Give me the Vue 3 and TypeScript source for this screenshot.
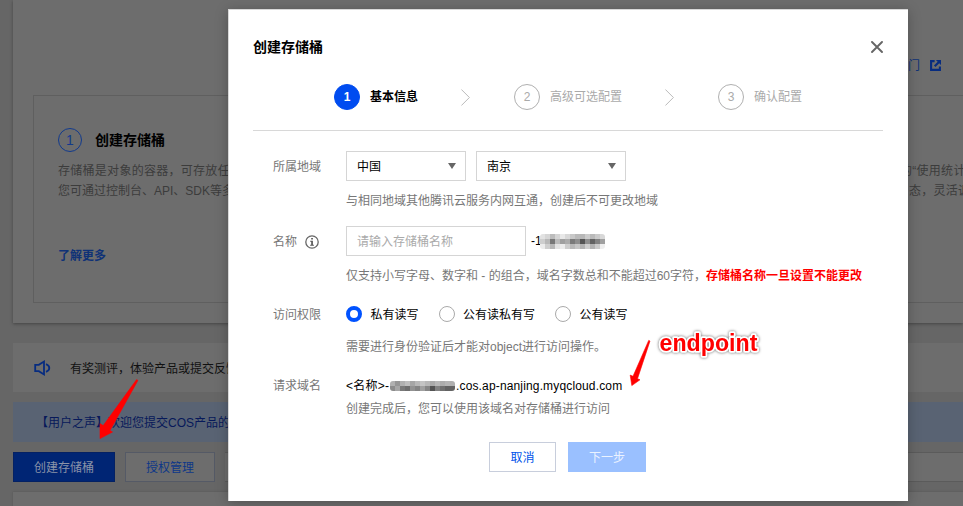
<script setup lang="ts">
interface Step {
  index: number
  label: string
  active: boolean
}

const steps: Step[] = [
  { index: 1, label: '基本信息', active: true },
  { index: 2, label: '高级可选配置', active: false },
  { index: 3, label: '确认配置', active: false },
]

const permissions = [
  { label: '私有读写', checked: true },
  { label: '公有读私有写', checked: false },
  { label: '公有读写', checked: false },
]

// Grey levels of the pixelated account ids, one row per line of cells
const nameMask: number[][] = [
  [226, 214, 188, 212, 232, 216, 200, 186, 184, 204, 186, 202, 216],
  [206, 184, 118, 186, 160, 172, 122, 142, 84, 142, 98, 130, 160],
  [236, 206, 182, 226, 236, 206, 184, 198, 178, 206, 178, 202, 238],
]
const domainMask: number[][] = [
  [176, 150, 176, 190, 166, 184, 196, 184, 170, 184, 172, 180, 176],
  [140, 166, 122, 110, 146, 132, 160, 134, 84, 130, 112, 98, 100],
]
const grey = (v: number): string => `rgb(${v}, ${v}, ${v})`
</script>

<template>
  <div class="screen">
    <div class="page">
      <section class="guide">
        <div class="guide-top">
          <span>快速入门</span>
          <svg class="ext" viewBox="0 0 10 10">
            <path d="M4.2 1H1v8h8V6" fill="none" stroke="currentColor" stroke-width="1.9" />
            <path d="M5.4 0H10v4.6L8.4 3 5 6.4 3.6 5 7 1.6z" fill="currentColor" />
          </svg>
        </div>
        <div class="guide-box">
          <div class="guide-col">
            <h3><i>1</i>创建存储桶</h3>
            <p class="loose">存储桶是对象的容器，可存放任意</p>
            <p>您可通过控制台、API、SDK等多种</p>
            <a>了解更多</a>
          </div>
          <div class="guide-right">
            <p class="loose">的“使用统计</p>
            <p class="loose second">态，灵活调</p>
          </div>
        </div>
      </section>
      <section class="notice">
        <svg class="horn" viewBox="0 0 17 16">
          <path d="M1.2 4.8h3.6L10 1.6v12.8L4.8 11.2H1.2z" fill="none" stroke="currentColor" stroke-width="1.8" />
          <path d="M12 4.2c4.4 1.8 4.4 5.8 0 7.6" fill="none" stroke="currentColor" stroke-width="1.8" />
        </svg>
        <span>有奖测评，体验产品或提交反馈</span>
      </section>
      <section class="voice">【用户之声】欢迎您提交COS产品的使用</section>
      <div class="actions">
        <button class="create">创建存储桶</button>
        <button class="auth">授权管理</button>
        <div class="search"></div>
      </div>
      <section class="table"></section>
    </div>

    <div class="dialog">
      <header class="head">
        <h2>创建存储桶</h2>
        <svg class="close" viewBox="0 0 12 12">
          <path d="M1 1l10 10M11 1L1 11" stroke="currentColor" stroke-width="1.9" stroke-linecap="round" />
        </svg>
      </header>
      <div class="steps">
        <template v-for="s in steps" :key="s.index">
          <div class="step" :class="{ active: s.active }">
            <b>{{ s.index }}</b><span>{{ s.label }}</span>
          </div>
          <svg v-if="s.index < 3" class="chev" viewBox="0 0 9 17">
            <path d="M.4.5l8 8-8 8" fill="none" stroke="#bababa" stroke-width="1" />
          </svg>
        </template>
      </div>

      <div class="row region">
        <label>所属地域</label>
        <div class="content">
          <div class="selects">
            <div class="select small">中国<i></i></div>
            <div class="select">南京<i></i></div>
          </div>
          <p class="hint">与相同地域其他腾讯云服务内网互通，创建后不可更改地域</p>
        </div>
      </div>
      <div class="row name">
        <label>名称
          <svg class="info" viewBox="0 0 14 14">
            <circle cx="7" cy="7" r="6.2" fill="none" stroke="#666" stroke-width="1.3" />
            <path d="M6.2 3h1.7v1.6H6.2zM5.2 5.8h2.7v4h1v1H5.2v-1h1V6.8h-1z" fill="#555" />
          </svg>
        </label>
        <div class="content">
          <div class="field">
            <div class="input">请输入存储桶名称</div>
            <span class="suffix">-1</span>
            <div class="mask">
              <div v-for="(r, i) in nameMask" :key="i" class="mask-row">
                <i v-for="(v, j) in r" :key="j" :style="{ background: grey(v) }"></i>
              </div>
            </div>
          </div>
          <p class="hint">仅支持小写字母、数字和 - 的组合，域名字数总和不能超过60字符，<strong>存储桶名称一旦设置不能更改</strong></p>
        </div>
      </div>
      <div class="row access">
        <label>访问权限</label>
        <div class="content">
          <div class="radios">
            <span v-for="p in permissions" :key="p.label" class="radio" :class="{ on: p.checked }"><i></i><span>{{ p.label }}</span></span>
          </div>
          <p class="hint">需要进行身份验证后才能对object进行访问操作。</p>
        </div>
      </div>
      <div class="row domain">
        <label>请求域名</label>
        <div class="content">
          <div class="host">
            <span class="prefix">&lt;名称&gt;-</span>
            <div class="mask">
              <div v-for="(r, i) in domainMask" :key="i" class="mask-row">
                <i v-for="(v, j) in r" :key="j" :style="{ background: grey(v) }"></i>
              </div>
            </div>
            <span class="fqdn">.cos.ap-nanjing.myqcloud.com</span>
          </div>
          <p class="hint">创建完成后，您可以使用该域名对存储桶进行访问</p>
        </div>
      </div>
      <footer class="foot">
        <button class="cancel">取消</button>
        <button class="next">下一步</button>
      </footer>
    </div>

    <svg class="marks" viewBox="0 0 963 506">
      <path class="arrow" d="M136.6 379.6L137.9 380.4 110 430.5 112.5 432 100 438.6 100 423.6 103.2 425.6z" />
      <path class="arrow" d="M648.7 340.4L650 341 637.5 378.7 640 379.8 631.8 385.6 630.2 375.1 633 376.3z" />
      <g class="endpoint">
        <text class="halo" x="659.5" y="351">endpoint</text>
      </g>
    </svg>
  </div>
</template>

<style>
body {
  margin: 0;
  overflow: hidden;
}
</style>

<style scoped>
.screen {
  position: relative;
  width: 963px;
  height: 506px;
  overflow: hidden;
  background: #666;
  color: #000;
  font: 12px/18px "Liberation Sans", "Noto Sans CJK SC", sans-serif;
  white-space: nowrap;
}
* {
  box-sizing: border-box;
}
h2, h3, p {
  margin: 0;
}
i {
  font-style: normal;
}
button {
  padding: 2px 0 0;
  font: inherit;
  border-radius: 0;
}
.page {
  padding-left: 13px;
}
.guide {
  height: 323px;
  padding-left: 20px;
  background: #6d6d6d;
  box-shadow: 0 1px 3px #444;
}
.guide-top {
  display: flex;
  justify-content: flex-end;
  align-items: center;
  gap: 10px;
  height: 95px;
  padding: 36px 22px 0 0;
  color: #0f3277;
}
.ext {
  width: 11px;
  height: 11px;
  color: #072c80;
}
.guide-box {
  display: flex;
  justify-content: space-between;
  height: 208px;
  border: 1px solid #5f5f5f;
  border-right: 0;
  color: #3c3c3c;
}
.guide-col {
  padding: 32px 0 0 24px;
}
.guide-col h3 {
  display: flex;
  align-items: center;
  gap: 13px;
  height: 24px;
  margin-bottom: 9px;
  font-size: 14px;
  color: #000;
}
.guide-col h3 i {
  width: 24px;
  height: 24px;
  border: 1px solid #123a8c;
  border-radius: 50%;
  color: #123a8c;
  font-weight: 400;
  line-height: 23px;
  text-align: center;
}
.guide-box p {
  line-height: 20px;
}
.guide-box .loose {
  letter-spacing: 0.28px;
}
.guide-col a {
  display: block;
  margin-top: 46px;
  color: #0f3277;
  font-weight: 700;
}
.guide-right {
  width: 63px;
  padding-top: 65px;
}
.guide-right .second {
  padding-left: 9px;
}
.notice {
  display: flex;
  align-items: center;
  gap: 19px;
  height: 49px;
  margin-top: 20px;
  padding-left: 21px;
  background: #6d6d6d;
  color: #111;
}
.notice span {
  padding-top: 2px;
}
.horn {
  width: 17px;
  height: 16px;
  color: #072c80;
}
.voice {
  height: 40px;
  margin-top: 10px;
  padding-left: 23px;
  background: #596373;
  color: #07195a;
  line-height: 42px;
}
.actions {
  display: flex;
  gap: 10px;
  height: 30px;
  margin-top: 10px;
}
.create {
  width: 102px;
  border: 1px solid #042163;
  background: #002574;
  color: #8a93a8;
}
.auth {
  width: 90px;
  border: 1px solid #555a66;
  background: #6d6d6d;
  color: #0e3788;
}
.search {
  flex: 1;
  border: solid #5b5b5b;
  border-width: 1px 0;
  background: #6d6d6d;
}
.table {
  height: 20px;
  margin-top: 10px;
  background: #6d6d6d;
  box-shadow: 0 0 2px #555;
}
.dialog {
  position: absolute;
  left: 228px;
  top: 9px;
  width: 680px;
  height: 492px;
  padding: 0 25px;
  border: 1px solid #d8d8d8;
  border-width: 1px 0 0 1px;
  background: #fff;
  box-shadow: 0 2px 12px rgba(0, 0, 0, 0.25);
}
.head {
  display: flex;
  align-items: center;
  justify-content: space-between;
  height: 22px;
  margin-top: 26px;
  margin-left: -1px;
}
.head h2 {
  font-size: 14px;
}
.close {
  width: 12px;
  height: 12px;
  color: #666;
}
.steps {
  display: flex;
  align-items: center;
  height: 73px;
  margin-left: -1px;
  padding: 6px 0 0 81px;
  border-bottom: 1px solid #d8d8d8;
}
.step {
  display: flex;
  align-items: center;
  gap: 10px;
  color: #aaa;
}
.step b {
  width: 26px;
  height: 26px;
  border: 1px solid #b0b0b0;
  border-radius: 50%;
  font-weight: 400;
  line-height: 25px;
  text-align: center;
}
.step.active {
  color: #000;
  font-weight: 700;
}
.step.active b {
  border-color: #004cf0;
  background: #004cf0;
  color: #fff;
  font-weight: 700;
}
.chev {
  width: 9px;
  height: 17px;
  margin: 0 44px 0 43px;
}
.row {
  display: flex;
  padding-left: 19px;
}
.row label {
  display: flex;
  align-items: center;
  gap: 8px;
  width: 73px;
  height: 22px;
  color: #777;
}
.region {
  margin-top: 20px;
}
.region label,
.name label {
  height: 32px;
}
.name {
  margin-top: 16px;
}
.access {
  margin-top: 19px;
}
.domain {
  margin-top: 21px;
}
.domain label {
  height: 18px;
}
.hint {
  margin-top: 11px;
  color: #777;
}
.hint strong {
  color: #f00;
}
.selects,
.field {
  display: flex;
  gap: 10px;
}
.select,
.input {
  display: flex;
  align-items: center;
  justify-content: space-between;
  width: 150px;
  height: 30px;
  padding: 2px 9px 0 10px;
  border: 1px solid #d5d5d5;
}
.select.small {
  width: 120px;
}
.select i {
  margin-top: -2px;
  border: 4px solid transparent;
  border-top: 6px solid #666;
  border-bottom: 0;
}
.input {
  width: 180px;
  color: #aaa;
}
.field {
  align-items: center;
  gap: 0;
}
.suffix {
  margin: 0 -2px 0 5px;
}
.info {
  width: 14px;
  height: 14px;
}
.mask {
  position: relative;
  overflow: hidden;
  border-radius: 3px;
}
.mask-row {
  display: flex;
}
.mask-row i {
  width: 5px;
  height: 5px;
}
.radios {
  display: flex;
  gap: 20px;
}
.radio {
  display: flex;
  align-items: center;
  gap: 8.5px;
}
.radio > span {
  padding-top: 2px;
}
.radio i {
  width: 16px;
  height: 16px;
  border: 1px solid #aaa;
  border-radius: 50%;
}
.radio.on i {
  border: 4px solid #0052ff;
}
.access .hint {
  margin-top: 14px;
}
.host {
  display: flex;
  align-items: center;
}
.prefix {
  width: 44px;
  letter-spacing: 0.25px;
}
.fqdn {
  padding-left: 1px;
  letter-spacing: 0.15px;
}
.domain .hint {
  margin-top: 5px;
}
.foot {
  display: flex;
  gap: 12px;
  margin-top: 24px;
  padding-left: 235px;
}
.cancel {
  width: 67px;
  height: 30px;
  border: 1px solid #c8cedc;
  background: #fff;
  color: #0052e9;
}
.next {
  width: 78px;
  height: 30px;
  border: 0;
  background: #9ac0ff;
  color: #eaf2ff;
}
.marks {
  position: absolute;
  inset: 0;
  width: 963px;
  height: 506px;
}
.arrow {
  fill: #f00;
  stroke: #f00;
  stroke-width: 0.6px;
}
.endpoint {
  filter: drop-shadow(0 0 1.5px rgba(0, 0, 0, 0.6));
}
.halo {
  font: 700 23.2px "Liberation Sans", sans-serif;
  fill: #f00;
  stroke: #fff;
  stroke-width: 3.5px;
  stroke-linejoin: round;
  paint-order: stroke;
}
</style>
